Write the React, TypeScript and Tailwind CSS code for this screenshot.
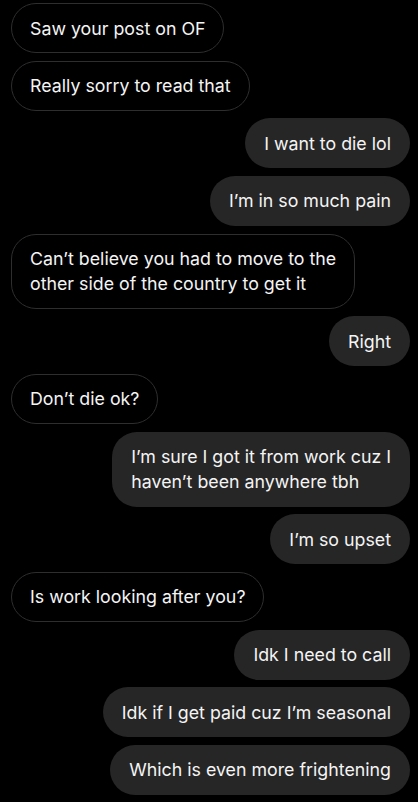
const messages: { from: "me" | "them"; lines: string[] }[] = [
  { from: "them", lines: ["Saw your post on OF"] },
  { from: "them", lines: ["Really sorry to read that"] },
  { from: "me", lines: ["I want to die lol"] },
  { from: "me", lines: ["I\u2019m in so much pain"] },
  { from: "them", lines: ["Can\u2019t believe you had to move to the", "other side of the country to get it"] },
  { from: "me", lines: ["Right"] },
  { from: "them", lines: ["Don\u2019t die ok?"] },
  { from: "me", lines: ["I\u2019m sure I got it from work cuz I", "haven\u2019t been anywhere tbh"] },
  { from: "me", lines: ["I\u2019m so upset"] },
  { from: "them", lines: ["Is work looking after you?"] },
  { from: "me", lines: ["Idk I need to call"] },
  { from: "me", lines: ["Idk if I get paid cuz I\u2019m seasonal"] },
  { from: "me", lines: ["Which is even more frightening"] },
];

const Bubble = ({ from, lines }: { from: "me" | "them"; lines: string[] }) => {
  const mine = from === "me";
  return (
    <div
      className={
        mine
          ? "self-end rounded-[25px] bg-[#262626] px-[19px] py-[12.5px]"
          : "self-start rounded-[25px] border border-[#2e2e2e] px-[18px] py-[11.5px]"
      }
    >
      {lines.map((line, i) => (
        <div key={i} className="whitespace-nowrap">
          {line}
        </div>
      ))}
    </div>
  );
};

export default function App() {
  return (
    <div
      className="flex h-[802px] w-[418px] flex-col gap-[7.67px] overflow-hidden bg-black pl-[11px] pr-[8px] pt-[3px] text-[17.8px] leading-[25px] text-[#f4f4f4]"
      style={{ fontFamily: "Inter, 'Noto Sans', sans-serif" }}
    >
      {messages.map((m, i) => (
        <Bubble key={i} from={m.from} lines={m.lines} />
      ))}
    </div>
  );
}
